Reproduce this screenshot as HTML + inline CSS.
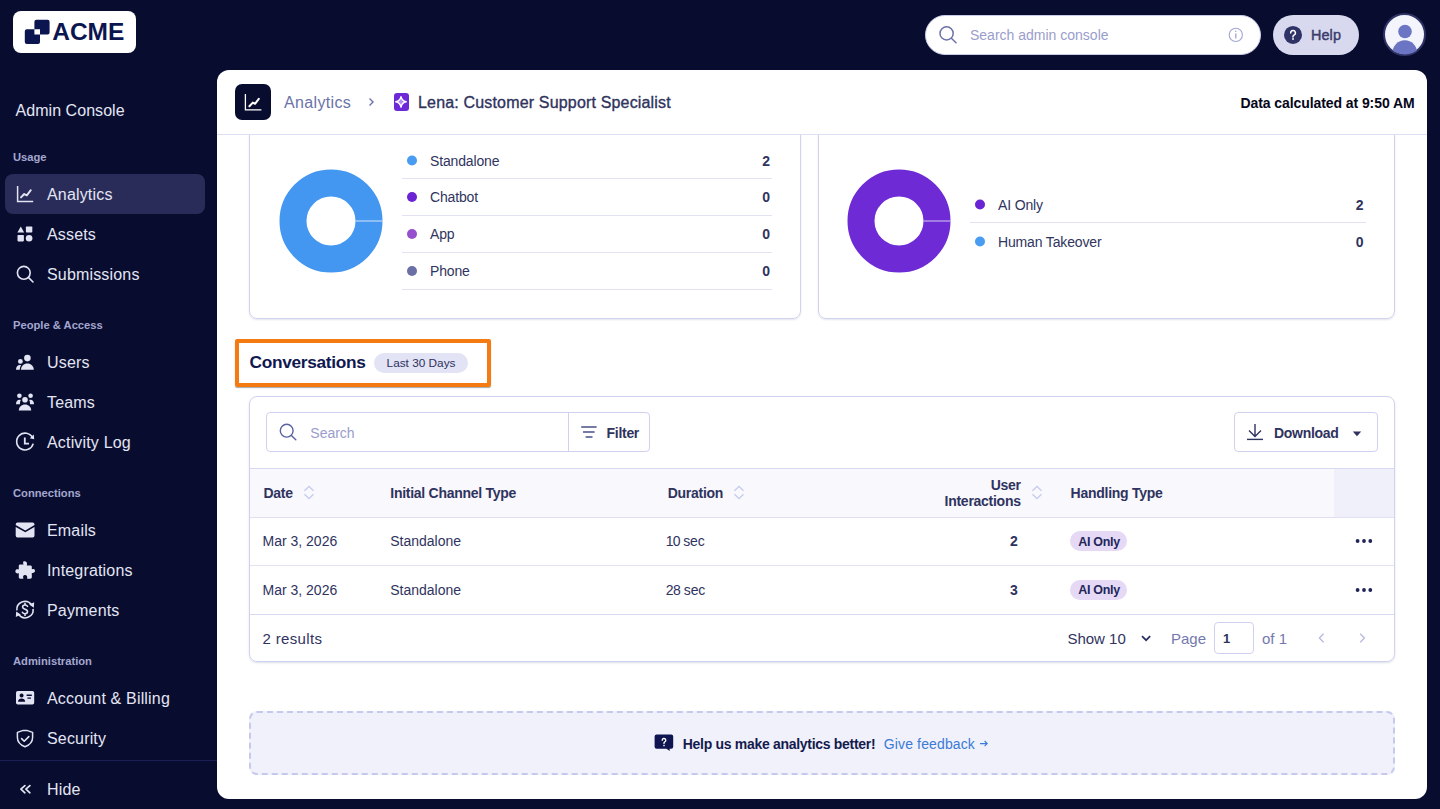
<!DOCTYPE html>
<html><head><meta charset="utf-8">
<style>
*{box-sizing:border-box;margin:0;padding:0}
html,body{width:1440px;height:809px;overflow:hidden;background:#080d2f;font-family:"Liberation Sans",sans-serif}
.a{position:absolute;white-space:nowrap;line-height:1}
.sb{color:#e4e5f4;font-size:16px;letter-spacing:0.17px}
.sh{color:#a4a7d0;font-size:11.2px;font-weight:bold}
svg{position:absolute;overflow:visible}
#card{position:absolute;left:217px;top:70px;width:1210px;height:729px;background:#fff;border-radius:12px;overflow:hidden}
.lg{font-size:14px;color:#30345e;letter-spacing:-0.15px}
.lv{font-size:14px;font-weight:bold;color:#30345e}
.th{font-size:14px;font-weight:bold;color:#2f335e;letter-spacing:-0.27px}
.td{font-size:14px;color:#2f3360}
.tv{font-size:14px;font-weight:bold;color:#2f3360}
.bd{font-size:12.5px;font-weight:bold;color:#22265a;letter-spacing:-0.3px}
</style></head><body>
<!-- logo -->
<div class="a" style="left:13px;top:11px;width:123px;height:42px;background:#fff;border-radius:8px"></div>
<svg style="left:0;top:0" width="140" height="60">
  <path fill="#0b1650" fill-rule="evenodd" d="M36.4 19.8h11.2a2 2 0 0 1 2 2v10.6a2 2 0 0 1-2 2H40v-5.2h-5.6V21.8a2 2 0 0 1 2-2z M26.8 29.2H34.4v5.2H40v7.6a2 2 0 0 1-2 2H26.8a2 2 0 0 1-2-2V31.2a2 2 0 0 1 2-2z"/>
</svg>
<div class="a" style="left:52.2px;top:20.1px;font-size:24.5px;font-weight:bold;color:#0b1650;letter-spacing:0px">ACME</div>


<!-- sidebar -->
<div class="a sb" style="left:15.5px;top:102.5px;letter-spacing:0.05px">Admin Console</div>
<div class="a sh" style="left:13px;top:152.3px">Usage</div>
<div class="a" style="left:5px;top:174px;width:200px;height:40px;background:#292c58;border-radius:8px"></div>
<div class="a sb" style="left:47px;top:186.5px">Analytics</div>
<div class="a sb" style="left:47px;top:226.5px">Assets</div>
<div class="a sb" style="left:47px;top:266.5px">Submissions</div>
<div class="a sh" style="left:13px;top:320.3px">People &amp; Access</div>
<div class="a sb" style="left:47px;top:354.5px">Users</div>
<div class="a sb" style="left:47px;top:394.5px">Teams</div>
<div class="a sb" style="left:47px;top:434.5px">Activity Log</div>
<div class="a sh" style="left:13px;top:488.3px">Connections</div>
<div class="a sb" style="left:47px;top:522.5px">Emails</div>
<div class="a sb" style="left:47px;top:562.5px">Integrations</div>
<div class="a sb" style="left:47px;top:602.5px">Payments</div>
<div class="a sh" style="left:13px;top:656.3px">Administration</div>
<div class="a sb" style="left:47px;top:690.5px">Account &amp; Billing</div>
<div class="a sb" style="left:47px;top:730.5px">Security</div>
<div class="a" style="left:0;top:760px;width:217px;height:1px;background:#1b2056"></div>
<div class="a sb" style="left:47px;top:781.5px">Hide</div>

<!-- sidebar icons -->
<svg style="left:0;top:0" width="217" height="809">
 <g fill="none" stroke="#e3e4f3" stroke-width="1.5">
  <path d="M17.6 186v15.4h15.6"/>
  <path d="M21 197.4l3.2-3.4 2.6 1.4 4-5.2" stroke-width="1.9" stroke-linecap="round" stroke-linejoin="round"/>
  <circle cx="23.8" cy="272.8" r="6.4" stroke-width="1.6"/>
  <path d="M28.6 277.6l4.4 4.4" stroke-width="1.6" stroke-linecap="round"/>
  <path d="M32.6 437.8A8.4 8.4 0 1 0 33.2 443.6" stroke-width="1.6"/>
  <path d="M24.8 437.6v6h4.2" stroke-width="1.8"/>
  <path d="M26.8 730.4l5.8 2v5.2c0 4.2-2.8 7.4-7.6 9.2c-4.8-1.8-7.6-5-7.6-9.2v-5.2l5.8-2z" transform="translate(0,0)" stroke-width="1.5" stroke-linejoin="round"/>
  <path d="M21.6 738.6l2.6 2.6 4.6-4.6" stroke-width="1.6" stroke-linecap="round" stroke-linejoin="round"/>
  <path d="M24.9 785.6l-4 3.6 4 3.6M29.9 785.6l-4 3.6 4 3.6" stroke-width="1.7" stroke-linecap="round" stroke-linejoin="round"/>
 </g>
 <g fill="#e3e4f3">
  <path d="M33.8 434.6l0.4 4.6-4.4-1z"/>
  <path d="M20.8 226.6l3.4 5.8h-6.8z"/>
  <rect x="25.9" y="226.4" width="6.4" height="6.2" rx="0.8"/>
  <rect x="17.5" y="235" width="6.4" height="6.4" rx="0.8"/>
  <circle cx="29.1" cy="238.2" r="3.3"/>
  <circle cx="27.4" cy="358.1" r="3.3"/>
  <path d="M21 369.8c0-3.8 2.9-6.4 6.4-6.4s6.4 2.6 6.4 6.4z"/>
  <circle cx="20.4" cy="361.4" r="2.4"/>
  <path d="M16 369.8c0-2.8 1.6-4.8 4-4.8c0.4 0 0.8 0.1 1.1 0.2c-0.8 1.2-1.3 2.8-1.3 4.6z"/>
  <circle cx="19.4" cy="395.7" r="2.3"/><circle cx="30.6" cy="395.7" r="2.3"/><circle cx="25" cy="399.8" r="2.8"/>
  <path d="M16 404.2c0-2.6 1.5-4.4 3.4-4.4c0.5 0 1 0.1 1.4 0.3c-0.6 1.1-0.9 2.4-0.9 3.8v0.3z"/>
  <path d="M34 404.2c0-2.6-1.5-4.4-3.4-4.4c-0.5 0-1 0.1-1.4 0.3c0.6 1.1 0.9 2.4 0.9 3.8v0.3z"/>
  <path d="M18.8 410.6c0-3.6 2.8-6 6.2-6s6.2 2.4 6.2 6z"/>
  <path d="M17.6 522.5h15a1.9 1.9 0 0 1 1.9 1.9v0.6l-9.2 5.6-9.6-5.6v-0.6a1.9 1.9 0 0 1 1.9-1.9z M15.7 526.9l9.6 5.4 9.2-5.4v8.6a1.9 1.9 0 0 1-1.9 1.9h-15a1.9 1.9 0 0 1-1.9-1.9z"/>
  <path d="M23.6 561.6c1.8-0.8 3.6 0.6 3.4 2.4l-0.2 1.4h3.6c0.8 0 1.4 0.6 1.4 1.4v2.4l1.2-0.3c1.8-0.2 2.6 1.8 1.6 3.2c-0.5 0.8-1.5 1-2.8 0.6v4.6c0 0.8-0.6 1.4-1.4 1.4h-3.4l0.2-1.2c0.3-1.6-1-2.6-2.4-2.4c-1.4 0.2-2 1.4-1.6 2.6l0.2 1h-3.2c-0.8 0-1.4-0.6-1.4-1.4v-4.2l-0.9 0.3c-1.8 0.4-3-1.2-2.4-2.8c0.4-1 1.6-1.6 3.3-1v-3.6c0-0.8 0.6-1.4 1.4-1.4h3.4l-0.4-1.2c-0.4-1 0.2-2.1 1-2.4z"/>
  <path fill-rule="evenodd" d="M17.8 691h14.6a1.8 1.8 0 0 1 1.8 1.8v10a1.8 1.8 0 0 1-1.8 1.8h-14.6a1.8 1.8 0 0 1-1.8-1.8v-10a1.8 1.8 0 0 1 1.8-1.8z M21.6 693.6a2 2 0 1 0 0.01 0z M18 701.8c0.2-2 1.6-3.2 3.6-3.2s3.4 1.2 3.6 3.2z M26.6 694.6h5.2v1.3h-5.2z M27.4 697.4h3.6v1.3h-3.6z"/>
 </g>
 <g fill="none" stroke="#e3e4f3" stroke-width="1.6">
  <path d="M16.9 610.4A8.1 8.1 0 0 1 31.4 604.6"/>
  <path d="M33.1 608.8A8.1 8.1 0 0 1 18.6 614.6"/>
 </g>
 <g fill="#e3e4f3">
  <path d="M29.2 604.6l5-2.4l-0.4 5.6z"/>
  <path d="M20.8 614.6l-5 2.4l0.4-5.6z"/>
 </g>
 <path d="M27.5 606.3C27 605.4 26.1 605 25 605C23.6 605 22.6 605.8 22.6 607C22.6 608.3 23.7 608.8 25 609.2C26.4 609.6 27.5 610.2 27.5 611.6C27.5 612.9 26.4 613.7 25 613.7C23.8 613.7 22.9 613.2 22.4 612.3M25 603.3v1.7M25 613.7v1.7" fill="none" stroke="#e3e4f3" stroke-width="1.6" stroke-linecap="round"/>
</svg>
<!-- topbar -->
<div class="a" style="left:925px;top:15px;width:336px;height:40px;background:#fff;border-radius:20px;border:1px solid #c9cbe9"></div>
<div class="a" style="left:970px;top:28px;font-size:14px;color:#9a9dcb">Search admin console</div>
<div class="a" style="left:1273px;top:15px;width:86px;height:40px;background:#d8d9ef;border-radius:20px"></div>
<div class="a" style="left:1311px;top:28.2px;font-size:14.4px;color:#393c6c;-webkit-text-stroke:0.45px #393c6c;letter-spacing:0.1px">Help</div>
<div class="a" style="left:1383px;top:13px;width:43px;height:43px;background:#f3f4fc;border-radius:50%;border:2px solid #2f3366"></div>



<svg style="left:0;top:0" width="1440" height="70">
  <g fill="none" stroke="#6b72a8" stroke-width="1.5"><circle cx="946.6" cy="33.4" r="6.6"/><path d="M951.4 38.2l4.6 4.6" stroke-linecap="round"/></g>
  <circle cx="1235.8" cy="34.9" r="6.6" fill="none" stroke="#a3a6d2" stroke-width="1.1"/>
  <path d="M1235.8 33.4v5" stroke="#a3a6d2" stroke-width="1.3"/><circle cx="1235.8" cy="31.2" r="0.8" fill="#a3a6d2"/>
  <circle cx="1293" cy="34.9" r="9" fill="#2e3265"/>
  <path d="M1290.7 32.9a2.35 2.35 0 1 1 3.3 2.2c-0.7 0.35-1 0.7-1 1.4v0.4" fill="none" stroke="#fff" stroke-width="1.5" stroke-linecap="round"/>
  <circle cx="1293" cy="39" r="0.9" fill="#fff"/>
  <clipPath id="avc"><circle cx="1405" cy="35" r="19.6"/></clipPath>
  <g clip-path="url(#avc)" fill="#6c74c4"><circle cx="1405" cy="31.5" r="6.8"/><ellipse cx="1404.8" cy="53" rx="12.4" ry="12.8"/></g>
</svg>
<div id="card"></div>
<!-- card header -->
<div class="a" style="left:235px;top:84px;width:36px;height:36px;background:#080d2f;border-radius:7px"></div>
<svg style="left:235px;top:84px" width="36" height="36"><path d="M10.4 10v15.8h16" fill="none" stroke="#fff" stroke-width="1.3"/><path d="M14.4 22.2l3.4-3.6 2.2 1.2 3.8-5" fill="none" stroke="#fff" stroke-width="2" stroke-linecap="round" stroke-linejoin="round"/></svg>
<div class="a" style="left:284px;top:94.8px;font-size:16px;color:#6b72a8;letter-spacing:0.35px">Analytics</div>
<svg style="left:366px;top:96px" width="12" height="12"><path d="M3.5 2.5l3.5 3.5-3.5 3.5" fill="none" stroke="#6b72a8" stroke-width="1.4"/></svg>
<div class="a" style="left:393.5px;top:92.5px;width:15px;height:18.5px;background:#6d29d8;border-radius:3px"></div>
<svg style="left:0;top:0" width="420" height="120"><path d="M401 96.6Q401.9 100.9 406.2 101.8Q401.9 102.7 401 107.2Q400.1 102.7 395.8 101.8Q400.1 100.9 401 96.6z" fill="#b58af0" stroke="#fff" stroke-width="1.4" stroke-linejoin="round"/></svg>
<div class="a" style="left:418px;top:94.8px;font-size:16px;color:#2f335d;letter-spacing:0.17px;-webkit-text-stroke:0.35px #2f335d">Lena: Customer Support Specialist</div>
<div class="a" style="left:1240.5px;top:95.8px;font-size:14px;font-weight:bold;color:#05061a;letter-spacing:-0.08px">Data calculated at 9:50 AM</div>
<div class="a" style="left:217px;top:134px;width:1210px;height:1px;background:#dcdef2"></div>

<!-- chart cards (clipped top) -->
<div class="a" style="left:249px;top:100px;width:552px;height:219px;border:1px solid #d0d3ef;border-radius:8px;box-shadow:0 1px 2px rgba(30,40,110,.12);clip-path:inset(35px -4px -4px -4px)"></div>
<div class="a" style="left:818px;top:100px;width:577px;height:219px;border:1px solid #d0d3ef;border-radius:8px;box-shadow:0 1px 2px rgba(30,40,110,.12);clip-path:inset(35px -4px -4px -4px)"></div>
<svg style="left:0;top:0" width="1440" height="330">
  <circle cx="331" cy="221" r="38" fill="none" stroke="#4497f1" stroke-width="27"/>
  <line x1="355.5" y1="221" x2="383" y2="221" stroke="#bcd9f8" stroke-width="1.2"/>
  <circle cx="899" cy="221" r="38" fill="none" stroke="#6d2ad5" stroke-width="27"/>
  <line x1="923.5" y1="221" x2="951" y2="221" stroke="#c9b3ef" stroke-width="1.2"/>
  <circle cx="412" cy="160.5" r="5" fill="#4a9cf2"/>
  <circle cx="412" cy="197" r="5" fill="#6a24d4"/>
  <circle cx="412" cy="234" r="5" fill="#9650cd"/>
  <circle cx="412" cy="271" r="5" fill="#6a70a5"/>
  <circle cx="980" cy="204.5" r="5" fill="#6a24d4"/>
  <circle cx="980" cy="241.5" r="5" fill="#4a9cf2"/>
  <g fill="#e1e3f3"><rect x="402" y="178" width="370" height="1"/><rect x="402" y="215" width="370" height="1"/><rect x="402" y="252" width="370" height="1"/><rect x="402" y="289" width="370" height="1"/><rect x="970" y="222" width="396" height="1"/></g>
</svg>
<div class="a lg" style="left:430px;top:153.5px">Standalone</div>
<div class="a lg" style="left:430px;top:190px">Chatbot</div>
<div class="a lg" style="left:430px;top:227px">App</div>
<div class="a lg" style="left:430px;top:264px">Phone</div>
<div class="a lv" style="right:670px;top:153.5px">2</div>
<div class="a lv" style="right:670px;top:190px">0</div>
<div class="a lv" style="right:670px;top:227px">0</div>
<div class="a lv" style="right:670px;top:264px">0</div>
<div class="a lg" style="left:998px;top:197.5px">AI Only</div>
<div class="a lg" style="left:998px;top:234.5px">Human Takeover</div>
<div class="a lv" style="right:76.5px;top:197.5px">2</div>
<div class="a lv" style="right:76.5px;top:234.5px">0</div>

<!-- conversations title -->
<div class="a" style="left:235px;top:339px;width:256px;height:48px;border:4px solid #f47b12;border-radius:2px;box-shadow:0 1px 1px rgba(0,0,0,.35)"></div>
<div class="a" style="left:249.5px;top:354.1px;font-size:17.3px;font-weight:bold;color:#0f1850;letter-spacing:-0.3px">Conversations</div>
<div class="a" style="left:374px;top:353px;width:94px;height:20px;background:#e2e3f4;border-radius:10px"></div>
<div class="a" style="left:386.6px;top:358px;font-size:11.8px;color:#2d3160">Last 30 Days</div>

<!-- table card -->
<div class="a" style="left:249px;top:396px;width:1146px;height:266px;border:1px solid #d0d3ef;border-radius:8px;box-shadow:0 1px 2px rgba(30,40,110,.15);overflow:hidden">
  <div style="position:absolute;left:0;top:71px;width:1144px;height:50px;background:#f8f8fd;border-top:1px solid #d6d9f0;border-bottom:1px solid #dfe1f3"></div>
  <div style="position:absolute;left:1084px;top:72px;width:60px;height:48px;background:#eff0f9"></div>
  <div style="position:absolute;left:0;top:168px;width:1144px;height:1px;background:#e1e3f3"></div>
  <div style="position:absolute;left:0;top:217px;width:1144px;height:1px;background:#d6d9f0"></div>
</div>
<div class="a" style="left:266px;top:412px;width:384px;height:40px;border:1px solid #cfd2ee;border-radius:4px"></div>
<div class="a" style="left:568px;top:413px;width:1px;height:38px;background:#cfd2ee"></div>
<div class="a" style="left:310.3px;top:425.5px;font-size:14px;color:#9a9dcb">Search</div>
<div class="a" style="left:606.6px;top:425.5px;font-size:14px;font-weight:bold;color:#2f335e;letter-spacing:-0.3px">Filter</div>
<div class="a" style="left:1234px;top:412px;width:144px;height:40px;border:1px solid #cfd2ee;border-radius:4px"></div>
<div class="a" style="left:1274px;top:425.5px;font-size:14px;font-weight:bold;color:#2f335e;letter-spacing:-0.3px">Download</div>

<div class="a th" style="left:263.5px;top:486.1px">Date</div>
<div class="a th" style="left:390.3px;top:486.1px">Initial Channel Type</div>
<div class="a th" style="left:667.7px;top:486.1px">Duration</div>
<div class="a th" style="right:419.3px;top:478px">User</div>
<div class="a th" style="right:419.3px;top:494.2px">Interactions</div>
<div class="a th" style="left:1070.6px;top:486.1px">Handling Type</div>

<div class="a td" style="left:262.5px;top:534.4px">Mar 3, 2026</div>
<div class="a td" style="left:390.2px;top:534.4px">Standalone</div>
<div class="a td" style="left:665.8px;top:534.4px;letter-spacing:-0.2px"><span style="letter-spacing:-0.9px">10</span> sec</div>
<div class="a tv" style="right:422.2px;top:534.4px">2</div>
<div class="a" style="left:1070px;top:531px;width:57px;height:20px;background:#e5d9f6;border-radius:10px"></div>
<div class="a bd" style="left:1078.2px;top:535.5px">AI Only</div>

<div class="a td" style="left:262.5px;top:583.4px">Mar 3, 2026</div>
<div class="a td" style="left:390.2px;top:583.4px">Standalone</div>
<div class="a td" style="left:665.8px;top:583.4px;letter-spacing:-0.2px"><span style="letter-spacing:-0.6px">28</span> sec</div>
<div class="a tv" style="right:422.2px;top:583.4px">3</div>
<div class="a" style="left:1070px;top:580px;width:57px;height:20px;background:#e5d9f6;border-radius:10px"></div>
<div class="a bd" style="left:1078.2px;top:584px">AI Only</div>

<div class="a" style="left:262.5px;top:630.9px;font-size:15px;color:#2f3360;letter-spacing:0.35px">2 results</div>
<div class="a" style="left:1067.4px;top:630.9px;font-size:15px;color:#2f3360">Show 10</div>
<div class="a" style="left:1171px;top:630.9px;font-size:15px;color:#7479ad">Page</div>
<div class="a" style="left:1214px;top:622px;width:40px;height:32px;border:1px solid #cfd2ee;border-radius:4px"></div>
<div class="a" style="left:1223px;top:631.8px;font-size:13px;font-weight:bold;color:#2f3360">1</div>
<div class="a" style="left:1262px;top:630.9px;font-size:15px;color:#7479ad">of 1</div>

<!-- feedback -->
<div class="a" style="left:249px;top:711px;width:1146px;height:64px;background:#f1f1fb;border:2px dashed #c5c9ec;border-radius:8px"></div>
<div class="a" style="left:682.8px;top:736.6px;font-size:14px;font-weight:bold;color:#141b4d;letter-spacing:-0.3px">Help us make analytics better!</div>
<div class="a" style="left:883.8px;top:736.6px;font-size:14px;color:#3b7ad6;letter-spacing:0.13px">Give feedback</div>

<svg style="left:0;top:0" width="1440" height="809">
  <g fill="none" stroke="#5a62a0" stroke-width="1.4"><circle cx="286.7" cy="430.7" r="6.4"/><path d="M291.4 435.4l4.4 4.4" stroke-linecap="round"/></g>
  <g stroke="#4a5088" stroke-width="1.5"><path d="M581.2 427h15.4M583 432h11.6M585.6 437h6.9"/></g>
  <g fill="none" stroke="#2f3360" stroke-width="1.4"><path d="M1255 424v12.2M1249 430.4l6 6 6-6"/><path d="M1247 439.4h16"/></g>
  <path d="M1352.8 431.6h8.4l-4.2 4.6z" fill="#2f3360"/>
  <g fill="none" stroke="#c5c9ec" stroke-width="1.3">
    <path d="M304.5 490.7l4.5-4.3 4.5 4.3M304.5 494.3l4.5 4.3 4.5-4.3"/>
    <path d="M734.5 490.7l4.5-4.3 4.5 4.3M734.5 494.3l4.5 4.3 4.5-4.3"/>
    <path d="M1032.5 490.7l4.5-4.3 4.5 4.3M1032.5 494.3l4.5 4.3 4.5-4.3"/>
  </g>
  <g fill="#1f2456"><circle cx="1357.6" cy="541" r="1.9"/><circle cx="1364" cy="541" r="1.9"/><circle cx="1370.3" cy="541" r="1.9"/>
  <circle cx="1357.6" cy="590" r="1.9"/><circle cx="1364" cy="590" r="1.9"/><circle cx="1370.3" cy="590" r="1.9"/></g>
  <path d="M1142 636.2l4.1 4 4.1-4" fill="none" stroke="#2a2e5e" stroke-width="1.7"/>
  <g fill="none" stroke="#b6b9dd" stroke-width="1.3"><path d="M1323.6 633.8l-4.2 4.2 4.2 4.2M1360.2 633.8l4.2 4.2-4.2 4.2"/></g>
  <path d="M656.6 734.5h14.6a2 2 0 0 1 2 2v10.2a2 2 0 0 1-2 2h-1.6l0.2 2.4-3.4-2.4h-9.8a2 2 0 0 1-2-2v-10.2a2 2 0 0 1 2-2z" fill="#0e1550"/>
  <path d="M662.2 740.3a1.8 1.8 0 1 1 2.6 1.6c-0.5 0.3-0.8 0.6-0.8 1.2v0.4" fill="none" stroke="#fff" stroke-width="1.3" stroke-linecap="round"/>
  <circle cx="664" cy="745.6" r="0.8" fill="#fff"/>
  <path d="M980 743.6h7M984.6 741l2.6 2.6-2.6 2.6" fill="none" stroke="#3b7ad6" stroke-width="1.1"/>
</svg>
</body></html>
